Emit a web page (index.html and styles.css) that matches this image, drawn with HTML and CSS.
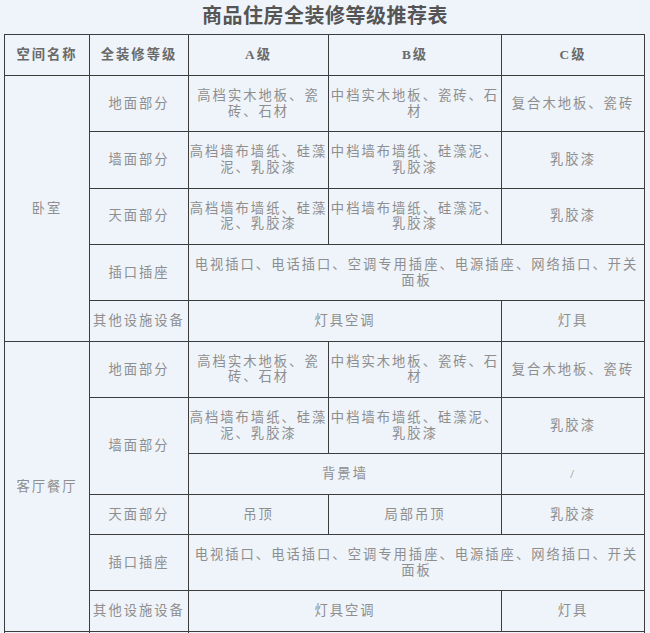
FILE: index.html
```html
<!DOCTYPE html>
<html lang="zh-CN">
<head>
<meta charset="utf-8">
<title>商品住房全装修等级推荐表</title>
<link rel="stylesheet" href="styles.css">
</head>
<body>
<h1 class="title">商品住房全装修等级推荐表</h1>
<table class="grade">
  <colgroup>
    <col class="c1"><col class="c2"><col class="c3"><col class="c4"><col class="c5">
  </colgroup>
  <thead>
    <tr>
      <th>空间名称</th>
      <th>全装修等级</th>
      <th>A级</th>
      <th>B级</th>
      <th>C级</th>
    </tr>
  </thead>
  <tbody>
    <tr>
      <td rowspan="5">卧室</td>
      <td>地面部分</td>
      <td>高档实木地板、瓷砖、石材</td>
      <td>中档实木地板、瓷砖、石材</td>
      <td>复合木地板、瓷砖</td>
    </tr>
    <tr>
      <td>墙面部分</td>
      <td>高档墙布墙纸、硅藻泥、乳胶漆</td>
      <td>中档墙布墙纸、硅藻泥、乳胶漆</td>
      <td>乳胶漆</td>
    </tr>
    <tr>
      <td>天面部分</td>
      <td>高档墙布墙纸、硅藻泥、乳胶漆</td>
      <td>中档墙布墙纸、硅藻泥、乳胶漆</td>
      <td>乳胶漆</td>
    </tr>
    <tr>
      <td>插口插座</td>
      <td colspan="3">电视插口、电话插口、空调专用插座、电源插座、网络插口、开关面板</td>
    </tr>
    <tr>
      <td>其他设施设备</td>
      <td colspan="2">灯具空调</td>
      <td>灯具</td>
    </tr>
    <tr>
      <td rowspan="6">客厅餐厅</td>
      <td>地面部分</td>
      <td>高档实木地板、瓷砖、石材</td>
      <td>中档实木地板、瓷砖、石材</td>
      <td>复合木地板、瓷砖</td>
    </tr>
    <tr>
      <td rowspan="2">墙面部分</td>
      <td>高档墙布墙纸、硅藻泥、乳胶漆</td>
      <td>中档墙布墙纸、硅藻泥、乳胶漆</td>
      <td>乳胶漆</td>
    </tr>
    <tr>
      <td colspan="2">背景墙</td>
      <td>/</td>
    </tr>
    <tr>
      <td>天面部分</td>
      <td>吊顶</td>
      <td>局部吊顶</td>
      <td>乳胶漆</td>
    </tr>
    <tr>
      <td>插口插座</td>
      <td colspan="3">电视插口、电话插口、空调专用插座、电源插座、网络插口、开关面板</td>
    </tr>
    <tr>
      <td>其他设施设备</td>
      <td colspan="2">灯具空调</td>
      <td>灯具</td>
    </tr>
    <tr class="next">
      <td rowspan="2"></td>
      <td></td>
      <td colspan="3"></td>
    </tr>
  </tbody>
</table>
</body>
</html>
```

FILE: styles.css
```css
html, body {
  margin: 0;
  padding: 0;
  background: #eff4fa;
}

body {
  font-family: "Liberation Serif", "Noto Sans CJK SC", serif;
  color: #8e8e8e;
}

.title {
  margin: 0;
  height: 34px;
  line-height: 33px;
  font-size: 20px;
  font-weight: bold;
  letter-spacing: 0.5px;
  color: #555;
  text-align: center;
}

.grade {
  margin-left: 4px;
  width: 640px;
  table-layout: fixed;
  border-collapse: collapse;
  font-size: 13.3px;
  letter-spacing: 2px;
}

.c1 { width: 85px; }
.c2 { width: 99px; }
.c3 { width: 140px; }
.c4 { width: 173px; }
.c5 { width: 143px; }

.grade th,
.grade td {
  border: 1px solid #3c3c3c;
  padding: 12px 0 11.7px;
  line-height: 15.8px;
  text-align: center;
  vertical-align: middle;
  font-weight: normal;
}

.grade th {
  font-weight: bold;
  color: #6a6a6a;
  padding: 12px 0;
  line-height: 16px;
}

.grade .next td {
  height: 40px;
}
```
